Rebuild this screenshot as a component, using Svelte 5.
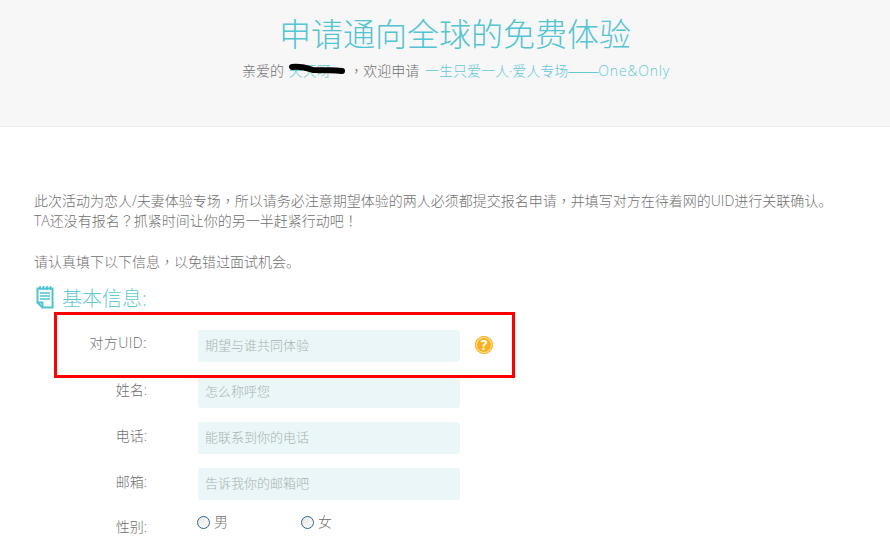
<script>
 const fields = [
     { label: '对方UID:', hint: '期望与谁共同体验', help: true },
     { label: '姓名:', hint: '怎么称呼您' },
     { label: '电话:', hint: '能联系到你的电话' },
     { label: '邮箱:', hint: '告诉我你的邮箱吧' }
 ];
</script>

<section class="banner">
    <h1>申请通向全球的免费体验</h1>
    <p class="welcome">
        亲爱的
        <span class="name">
            天天呀
            <svg class="scribble" width="58" height="14" viewBox="0 0 58 14">
                <path d="M3 4 C12 3 18 5 24 7 C32 7 42 7 53 8" fill="none" stroke="#000" stroke-width="6" stroke-linecap="round"/>
            </svg>
        </span>
        <span class="tc">，</span>欢迎申请
        <span class="teal">一生只爱一人·爱人专场<span class="dash">——</span><span class="latin">One&amp;Only</span></span>
    </p>
</section>

<section class="intro">
    <p>此次活动为恋人/夫妻体验专场<span class="tc">，</span>所以请务必注意期望体验的两人必须都提交报名申请<span class="tc">，</span>并填写对方在待着网的UID进行关联确认。</p>
    <p>TA还没有报名<span class="tc">？</span>抓紧时间让你的另一半赶紧行动吧<span class="tc">！</span></p>
    <p class="gap">请认真填下以下信息<span class="tc">，</span>以免错过面试机会。</p>
</section>

<h2>
    <svg width="18" height="24" viewBox="0 0 18 24">
        <path d="M1.500 3.500H16.500V22.500H6.500L1.500 17.500Z" fill="none" stroke="#4fc3d2" stroke-width="2"/>
        <path d="M1.500 17.500H6.500V22.500" fill="none" stroke="#4fc3d2" stroke-width="2"/>
        <path d="M4 8H14M4 11H14M4 14H14" stroke="#4fc3d2" stroke-width="1.500"/>
        <path d="M4 1V5M7.500 1V5M11 1V5M14.500 1V5" stroke="#4fc3d2" stroke-width="1.600"/>
    </svg>
    基本信息:
</h2>

<form class="form">
    <div class="redbox"></div>
    {#each fields as f}
        <div class="row">
            <label class:uid={f.help}>{f.label}</label>
            <input type="text" placeholder={f.hint} />
            {#if f.help}
                <span class="help">?</span>
            {/if}
        </div>
    {/each}
    <div class="row gender">
        <label>性别:</label>
        <div class="choices">
            <span class="choice"><i class="radio"></i>男</span>
            <span class="choice"><i class="radio"></i>女</span>
        </div>
    </div>
</form>

<style>
 :global(body) {
     background: #fff;
     font-family: "Open Sans", "Noto Sans CJK SC", sans-serif;
     font-weight: 300;
     color: #707070;
     font-size: 14px;
     overflow: hidden;
 }

 .banner {
     height: 126px;
     background: #f7f7f7;
     border-bottom: 1px solid #eee;
     text-align: center;
     overflow: hidden;
 }

 h1 {
     margin: 13px 0 0;
     padding-left: 20px;
     font-size: 32px;
     line-height: 42px;
     font-weight: 300;
     color: #52c4d2;
 }

 .welcome {
     margin: 5px 0 0;
     height: 20px;
     line-height: 20px;
     font-size: 14px;
     padding-left: 22px;
 }

 .name {
     position: relative;
     margin: 0 12px 0 1px;
     color: #58c6d3;
 }

 .scribble {
     position: absolute;
     left: 0;
     top: 2px;
 }

 .tc {
     font-family: "Noto Sans CJK TC", sans-serif;
     margin-left: 3px;
 }

 .dash {
     font-family: "Liberation Sans", sans-serif;
     font-size: 15px;
 }

 .latin {
     letter-spacing: 0.8px;
 }

 .teal {
     color: #62c9d6;
     margin-left: 2px;
 }

 .intro {
     margin-top: 63px;
     padding-left: 34px;
 }

 .intro p {
     margin: 0;
     height: 20px;
     line-height: 20px;
 }

 .intro .tc {
     margin-left: 0;
 }

 .intro .gap {
     margin-top: 21px;
 }

 h2 {
     margin: 14px 0 0 36px;
     display: flex;
     align-items: center;
     gap: 8px;
     height: 24px;
     font-size: 20px;
     font-weight: 300;
     color: #62c9d6;
 }

 .form {
     position: relative;
     margin-top: 21px;
 }

 .redbox {
     position: absolute;
     left: 54px;
     top: -18px;
     width: 455px;
     height: 60px;
     border: 3px solid #f00;
 }

 .row {
     display: flex;
     height: 32px;
     margin-bottom: 14px;
     align-items: flex-start;
 }

 label {
     width: 147px;
     text-align: right;
     line-height: 28px;
     flex: none;
 }

 label.uid {
     margin-top: -1px;
     letter-spacing: 0.5px;
 }

 input {
     margin-left: 51px;
     width: 262px;
     height: 32px;
     box-sizing: border-box;
     padding: 0 7px 2px;
     border: 0;
     border-radius: 3px;
     background: #eaf6f7;
     font: inherit;
     font-size: 13px;
     color: #666;
 }

 input::placeholder {
     color: #a9b2b2;
     opacity: 1;
 }

 .help {
     margin: 6px 0 0 15px;
     width: 18px;
     height: 18px;
     box-sizing: border-box;
     border-radius: 50%;
     background: #fbb01e;
     box-shadow: inset 0 0 0 1px #fbb01e, inset 0 0 0 2px #ffe3a8;
     color: #fff;
     font-size: 14px;
     font-weight: 700;
     line-height: 18px;
     text-align: center;
 }

 .gender label {
     line-height: 26px;
 }

 .choices {
     margin-left: 50px;
     display: flex;
     line-height: 18px;
     margin-top: -1px;
 }

 .choice {
     width: 104px;
     display: flex;
     align-items: center;
     gap: 4px;
     height: 18px;
 }

 .radio {
     width: 13px;
     height: 13px;
     box-sizing: border-box;
     border-radius: 50%;
     border: 1.5px solid #2f6396;
     background: linear-gradient(135deg, #e6e6e2, #fff);
 }
</style>
